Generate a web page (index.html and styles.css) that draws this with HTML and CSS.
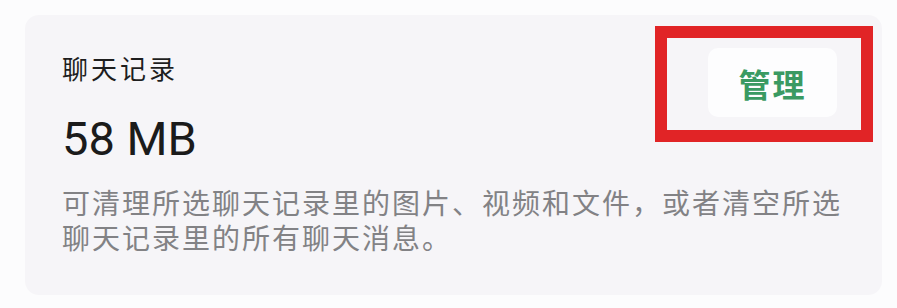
FILE: index.html
```html
<!DOCTYPE html>
<html lang="zh-CN">
<head>
<meta charset="utf-8">
<title>聊天记录</title>
<link rel="stylesheet" href="styles.css">
</head>
<body>
<div class="card">
  <div class="head">
    <div class="info">
      <div class="title">聊天记录</div>
      <div class="size">58 MB</div>
    </div>
    <button class="manage">管理</button>
  </div>
  <p class="desc">可清理所选聊天记录里的图片、视频和文件，或者清空所选聊天记录里的所有聊天消息。</p>
</div>
<div class="highlight"></div>
</body>
</html>
```

FILE: styles.css
```css
html, body {
  margin: 0;
  padding: 0;
}
body {
  background: #fcfcfd;
  width: 897px;
  height: 308px;
  overflow: hidden;
  position: relative;
  font-family: "Noto Sans CJK SC", "Noto Sans", sans-serif;
}
.card {
  margin: 15px 15px 0 25px;
  height: 280px;
  box-sizing: border-box;
  background: #f6f5f8;
  border-radius: 14px;
  padding: 33px 45px 0 37px;
}
.head {
  display: flex;
  justify-content: space-between;
  align-items: flex-start;
}
.info {
  display: flex;
  flex-direction: column;
}
.title {
  font-size: 26px;
  line-height: 30px;
  letter-spacing: 3px;
  color: #1e1e1e;
  margin-top: 5px;
}
.size {
  font-family: Roboto, "Liberation Sans", sans-serif;
  font-size: 47px;
  line-height: 56px;
  color: #1b1b1b;
  margin-top: 28px;
}
.manage {
  margin-top: 0;
  width: 129px;
  height: 69px;
  border: none;
  border-radius: 10px;
  background: #fdfdfe;
  color: #3a9a62;
  font-family: "Noto Sans CJK SC", sans-serif;
  font-weight: 700;
  font-size: 32px;
  letter-spacing: 2px;
  padding: 0;
}
.desc {
  margin: 18px -25px 0 0;
  font-size: 28px;
  line-height: 35px;
  letter-spacing: 2px;
  color: #828285;
}
.highlight {
  position: absolute;
  left: 655px;
  top: 26px;
  width: 218px;
  height: 116px;
  box-sizing: border-box;
  border: 12px solid #e12426;
}
```
